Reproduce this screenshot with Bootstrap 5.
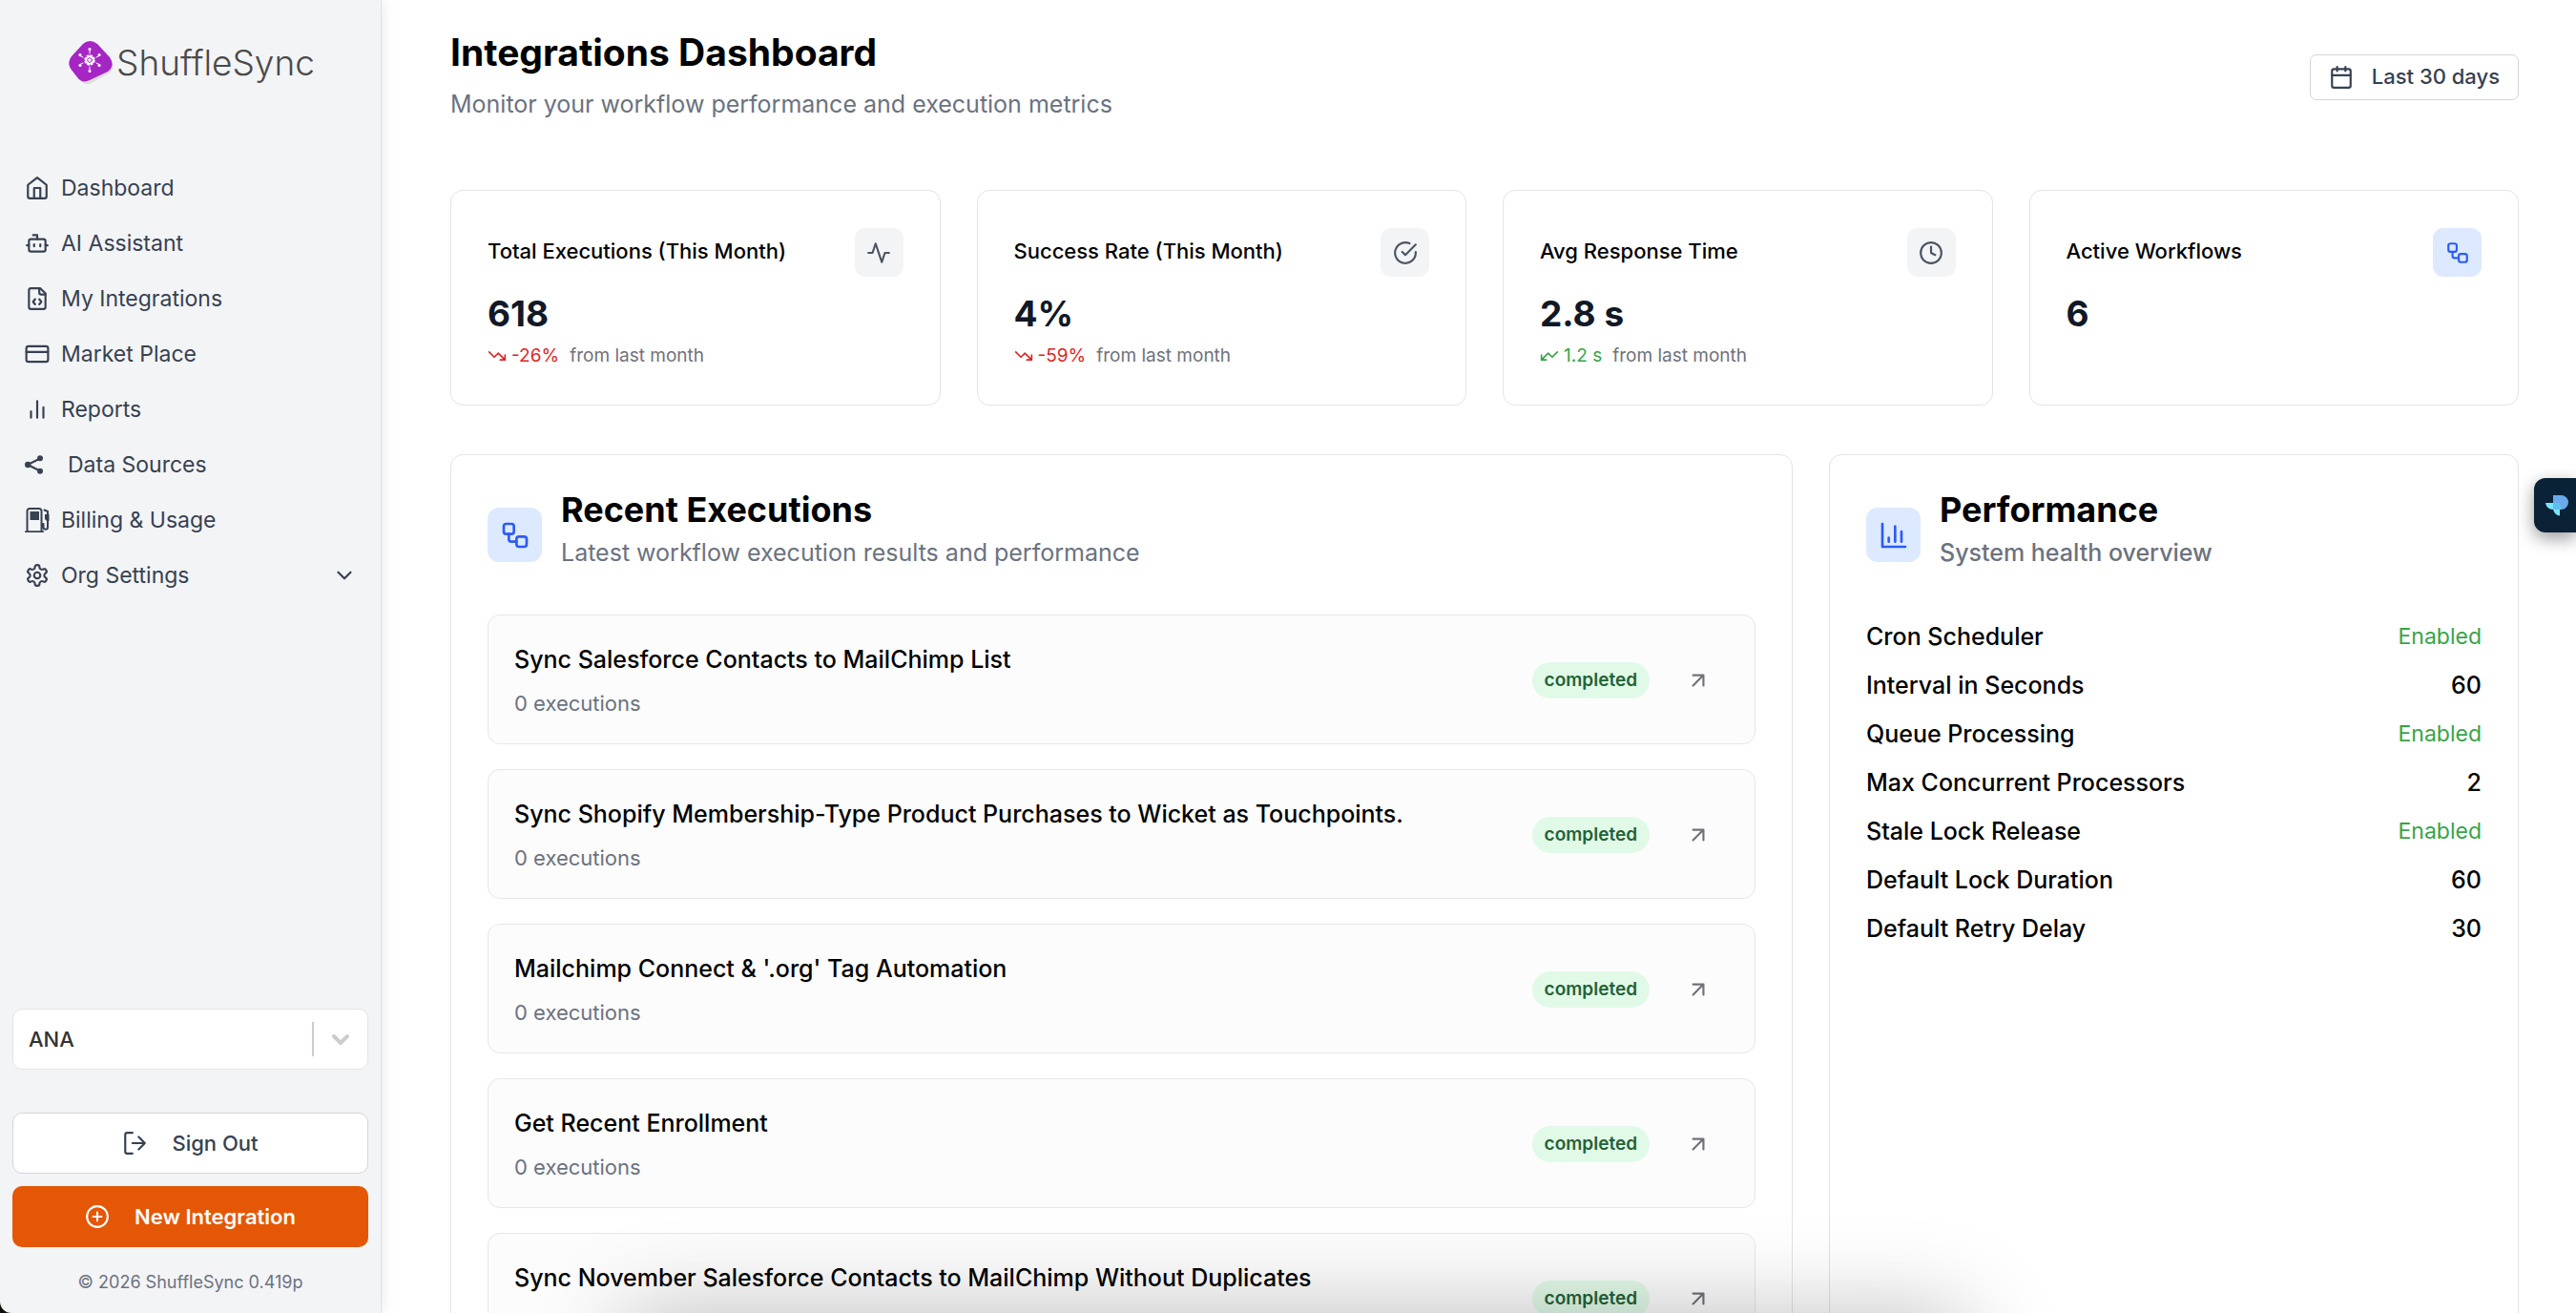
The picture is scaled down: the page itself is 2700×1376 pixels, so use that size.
<!DOCTYPE html>
<html lang="en">
<head>
<meta charset="utf-8">
<meta name="viewport" content="width=device-width, initial-scale=1">
<title>Integrations Dashboard - ShuffleSync</title>
<link href="https://cdn.jsdelivr.net/npm/bootstrap@5.3.0/dist/css/bootstrap.min.css" rel="stylesheet">
<style>
  :root { --line: #e4e4e7; --ink: #374151; --muted: #6b7280; --blue: #2b5cf6; }
  body { font-family: Inter, "Liberation Sans", sans-serif; font-size: 25px; line-height: 32px; color: #000; background: #fff; }
  svg { fill: none; stroke: currentColor; stroke-width: 2; stroke-linecap: round; stroke-linejoin: round; flex-shrink: 0; display: block; }
  .ic-20 { width: 20px; height: 20px; }
  .ic-26 { width: 26px; height: 26px; }
  .ic-32 { width: 32px; height: 32px; }
  .fw-500 { font-weight: 500; }
  .tone-muted { color: var(--muted); }

  .side-wrap { width: 400px; background: #0b0f08; box-shadow: 0 0 14px rgba(0,0,0,.1); z-index: 2; }
  .side { background: #f3f4f6; border-right: 1px solid #dfe2e7; border-bottom-left-radius: 12px; padding: 0 13px 17px; color: var(--ink); }
  .brand { color: #4a4a4a; font-size: 37px; line-height: 44px; font-weight: 350; padding: 42px 0 0 59px; gap: 2px; }
  .brand svg { width: 48px; height: 48px; }
  .side-nav { margin-top: 86px; padding-left: 13px; gap: 16px; }
  .side-nav .nav-link { color: var(--ink); font-size: 23px; line-height: 30px; padding: 6px 12px 6px 0; gap: 12px; }
  .side-nav .nav-link:hover { color: #111827; }
  .side-nav .spaced { gap: 25px; }
  .side-actions { gap: 13px; }
  .side-field { height: 64px; border-radius: 10px; font-size: 22px; }
  .org-box { margin-bottom: 32px; }
  .org-select { appearance: none; border: 1px solid #e2e4e8; background: #fff; color: #333; padding: 0 16px; }
  .org-mark { right: 18px; top: 13px; pointer-events: none; color: #ccc; }
  .side-btn { gap: 26px; }
  .btn-out, .btn-out:hover { background: #fff; border: 1px solid #d1d5db; color: var(--ink); }
  .btn-new, .btn-new:hover { background: #e45706; color: #fff; border: 0; }
  .side-foot { font-size: 18px; line-height: 30px; margin-top: 9px; }

  .main-area { padding: 30px 60px 0 72px; }
  .page-title { font-size: 39px; line-height: 50px; font-weight: 700; margin: 0; }
  .page-sub { margin: 13px 0 0; }
  .btn-range, .btn-range:hover { height: 48px; margin-top: 6px; border: 1px solid #d1d5db; border-radius: 7px; background: #fff; color: var(--ink); font-size: 22px; padding: 0 19px; gap: 19px; }
  .stat-row { --bs-gutter-x: 38px; margin-top: 74px; }
  .panel { border: 1px solid var(--line); border-radius: 13px; background: #fff; padding: 38px; }
  .stat { height: 226px; padding: 39px 38px; }
  .stat-name { font-size: 22px; line-height: 28px; margin: 0 0 3px; font-weight: 500; }
  .stat-num { font-size: 37px; line-height: 48px; font-weight: 700; color: #111827; margin-top: 15px; }
  .stat-sub { font-size: 19px; line-height: 24px; color: #71717a; gap: 5px; margin-top: 8px; }
  .delta { margin-right: 6px; }
  .down { color: #dc2626; }
  .up { color: #37a447; }
  .tile { width: 51px; height: 51px; border-radius: 11px; background: #f3f4f6; color: #4b5563; }
  .tile-blue { background: #dde9fe; color: var(--blue); }
  .tile-lg { width: 57px; height: 57px; margin-top: 17px; border-radius: 12px; }

  .panels { display: grid; grid-template-columns: 1407fr 723fr; gap: 38px; margin-top: 51px; }
  .panel-head { gap: 20px; margin-bottom: 50px; }
  .panel-title { font-size: 36px; line-height: 44px; font-weight: 700; margin: -3px 0 0; }
  .panel-sub { margin: 10px 0 0; line-height: 26px; }
  .runs { gap: 26px; padding-top: 2px; }
  .run { border: 1px solid #e5e7eb; border-radius: 13px; background: #fcfcfc; padding: 29px 46px 28px 27px; min-height: 136px; color: #000; }
  .run-name { font-weight: 500; }
  .run-sub { font-size: 22px; line-height: 28px; margin-top: 16px; color: var(--muted); }
  .state { height: 38px; border-radius: 19px; padding: 0 13px; font-size: 19px; font-weight: 600; background: #e1fae8; color: #256235; margin-right: 38px; }
  .run svg { color: #71717a; }
  .facts { margin: 0; }
  .facts > div { line-height: 51px; }
  .facts dt { font-weight: 500; }
  .facts dd { margin: 0; font-weight: 500; }
  .facts dd.up { font-weight: 400; font-size: 23px; }

  .helper { right: 0; top: 501px; width: 44px; height: 57px; background: #0b2135; border: 0; border-radius: 12px 0 0 12px; box-shadow: 0 6px 18px rgba(0,0,0,.4); padding: 0 0 0 12px; z-index: 3; }
  .helper svg { width: 24px; height: 24px; stroke: none; }
  .dock-shade { left: 655px; right: 640px; bottom: -100px; height: 100px; box-shadow: 0 0 95px rgba(0,0,0,.25); pointer-events: none; z-index: 4; }
</style>
</head>
<body>
<div class="d-flex vh-100 overflow-hidden">
  <div class="side-wrap flex-shrink-0 position-relative">
    <aside class="side d-flex flex-column h-100">
      <div class="brand d-flex align-items-center">
        <svg viewBox="0 0 48 48" stroke="none" aria-hidden="true">
          <path fill="#dcdcdc" stroke="none" d="M16 7Q24 0 32 8L44 21Q50 29 42 35L24 45Q16 48 11 41L4 31Q0 24 5 18Z"/>
          <path fill="#a626c4" stroke="none" d="M15 4Q22-2 30 4L43 18Q49 27 41 33L22 42Q14 46 9 39L2 30Q-2 23 3 17Z"/>
          <g stroke="#fff" stroke-width="1"><path d="M22 14V9M22 28v5M15 18l-4-2M29 18l4-2M15 24l-4 2M29 24l4 2"/></g>
          <g fill="#fff" stroke="none"><circle cx="22" cy="9.500" r="1.500"/><circle cx="22" cy="32.500" r="1.500"/><circle cx="12" cy="15.500" r="1.500"/><circle cx="32" cy="15.500" r="1.500"/><circle cx="12" cy="26.500" r="1.500"/><circle cx="32" cy="26.500" r="1.500"/></g>
          <circle cx="22" cy="21" r="4.500" fill="#fff" stroke="#fff" stroke-width="2.500" stroke-dasharray="2.500 1" stroke-linecap="butt"/>
          <circle cx="22" cy="21" r="2.300" stroke="#a626c4" stroke-width="1"/>
        </svg>
        <span>ShuffleSync</span>
      </div>

      <nav class="nav flex-column side-nav" aria-label="Main">
        <a class="nav-link d-flex align-items-center" href="#"><svg class="ic-26" viewBox="0 0 24 24"><path d="m3 9 9-7 9 7v11a2 2 0 0 1-2 2H5a2 2 0 0 1-2-2z"/><path d="M9 22V12h6v10"/></svg>Dashboard</a>
        <a class="nav-link d-flex align-items-center" href="#"><svg class="ic-26" viewBox="0 0 24 24"><path d="M12 8V4H8"/><rect x="4" y="8" width="16" height="12" rx="2"/><path d="M2 14h2M20 14h2M15 13v2M9 13v2"/></svg>AI Assistant</a>
        <a class="nav-link d-flex align-items-center" href="#"><svg class="ic-26" viewBox="0 0 24 24"><path d="M10 12.500 8 15l2 2.500M14 12.500l2 2.500-2 2.500M14 2v4a2 2 0 0 0 2 2h4"/><path d="M15 2H6a2 2 0 0 0-2 2v16a2 2 0 0 0 2 2h12a2 2 0 0 0 2-2V7z"/></svg>My Integrations</a>
        <a class="nav-link d-flex align-items-center" href="#"><svg class="ic-26" viewBox="0 0 24 24" stroke-width="1.800"><rect x="1.500" y="4.500" width="21" height="15" rx="2"/><path d="M1.500 10h21"/></svg>Market Place</a>
        <a class="nav-link d-flex align-items-center" href="#"><svg class="ic-26" viewBox="0 0 24 24"><path d="M18 20V10M12 20V4M6 20v-6"/></svg>Reports</a>
        <a class="nav-link d-flex align-items-center spaced" href="#"><svg class="ic-20" viewBox="0 0 20 20" stroke-width="1"><path d="M16 3.500 3 10l13 6.500"/><g fill="currentColor" stroke="none"><circle cx="3.200" cy="10" r="3.200"/><circle cx="16" cy="3.300" r="3"/><circle cx="16" cy="16.700" r="3"/></g></svg>Data Sources</a>
        <a class="nav-link d-flex align-items-center" href="#"><svg class="ic-26" viewBox="0 0 26 26" stroke-width="1.500"><path d="M2.500 25V3.500A2.500 2.500 0 0 1 5 1h10a2.500 2.500 0 0 1 2.500 2.500V25M1 25.200h18M17.500 17h2v3.500a2 2 0 0 0 4.500 0V4L20.500 2.500"/><path fill="currentColor" stroke="none" d="M5.500 4h9.500v9H5.500zM21 7h4.500v7L23 14l-2-2z"/></svg>Billing &amp; Usage</a>
        <a class="nav-link d-flex align-items-center" href="#"><svg class="ic-26" viewBox="0 0 24 24"><path d="M12.220 2h-.44a2 2 0 0 0-2 2v.18a2 2 0 0 1-1 1.730l-.43.25a2 2 0 0 1-2 0l-.15-.08a2 2 0 0 0-2.730.73l-.22.38a2 2 0 0 0 .73 2.730l.15.1a2 2 0 0 1 1 1.720v.51a2 2 0 0 1-1 1.740l-.15.09a2 2 0 0 0-.73 2.730l.22.38a2 2 0 0 0 2.730.73l.15-.08a2 2 0 0 1 2 0l.43.25a2 2 0 0 1 1 1.730V20a2 2 0 0 0 2 2h.44a2 2 0 0 0 2-2v-.18a2 2 0 0 1 1-1.730l.43-.25a2 2 0 0 1 2 0l.15.08a2 2 0 0 0 2.730-.73l.22-.39a2 2 0 0 0-.73-2.730l-.15-.08a2 2 0 0 1-1-1.740v-.5a2 2 0 0 1 1-1.740l.15-.09a2 2 0 0 0 .73-2.730l-.22-.38a2 2 0 0 0-2.730-.73l-.15.08a2 2 0 0 1-2 0l-.43-.25a2 2 0 0 1-1-1.730V4a2 2 0 0 0-2-2z"/><circle cx="12" cy="12" r="3"/></svg><span class="flex-grow-1">Org Settings</span><svg class="ic-26" viewBox="0 0 24 24"><path d="m6 9 6 6 6-6"/></svg></a>
      </nav>

      <div class="side-actions mt-auto d-flex flex-column">
        <div class="org-box position-relative">
          <label class="visually-hidden" for="org">Organization</label>
          <select id="org" class="side-field org-select w-100 fw-500"><option>ANA</option></select>
          <svg class="org-mark position-absolute" width="42" height="38" viewBox="0 0 42 38" aria-hidden="true"><path d="M2 1v36" stroke-linecap="butt"/><path d="m24 16 7 7 7-7" stroke-width="4"/></svg>
        </div>
        <button type="button" class="btn btn-out side-field side-btn w-100 fw-500 d-flex align-items-center justify-content-center"><svg class="ic-26" viewBox="0 0 24 24" stroke-width="1.800"><path d="M10 22H5a2 2 0 0 1-2-2V4a2 2 0 0 1 2-2h5M16 18l6-6-6-6M22 12H10"/></svg>Sign Out</button>
        <button type="button" class="btn btn-new side-field side-btn w-100 fw-semibold d-flex align-items-center justify-content-center"><svg class="ic-26" viewBox="0 0 24 24"><circle cx="12" cy="12" r="10"/><path d="M8 12h8M12 8v8"/></svg>New Integration</button>
        <div class="side-foot text-center tone-muted">© 2026 ShuffleSync 0.419p</div>
      </div>
    </aside>
  </div>

  <main class="main-area flex-grow-1 overflow-hidden">
    <header class="d-flex justify-content-between align-items-center">
      <div>
        <h1 class="page-title">Integrations Dashboard</h1>
        <p class="page-sub tone-muted">Monitor your workflow performance and execution metrics</p>
      </div>
      <button type="button" class="btn btn-range fw-500 d-flex align-items-center"><svg class="ic-26" viewBox="0 0 24 24"><path d="M8 2v4M16 2v4M3 10h18"/><rect x="3" y="4" width="18" height="18" rx="2"/></svg>Last 30 days</button>
    </header>

    <section class="row row-cols-4 stat-row">
      <div class="col"><div class="panel stat">
        <div class="d-flex justify-content-between align-items-center"><h2 class="stat-name">Total Executions (This Month)</h2><span class="tile d-flex align-items-center justify-content-center"><svg class="ic-26" viewBox="0 0 24 24"><path d="M22 12h-4l-3 9L9 3l-3 9H2"/></svg></span></div>
        <div class="stat-num">618</div>
        <div class="stat-sub d-flex align-items-center"><svg class="ic-20 down" viewBox="0 0 24 24"><path d="m22 17-8.500-8.500-5 5L2 7M16 17h6v-6"/></svg><span class="delta down">-26%</span><span>from last month</span></div>
      </div></div>
      <div class="col"><div class="panel stat">
        <div class="d-flex justify-content-between align-items-center"><h2 class="stat-name">Success Rate (This Month)</h2><span class="tile d-flex align-items-center justify-content-center"><svg class="ic-26" viewBox="0 0 24 24"><path d="M22 11.080V12a10 10 0 1 1-5.930-9.140M9 11l3 3L22 4"/></svg></span></div>
        <div class="stat-num">4%</div>
        <div class="stat-sub d-flex align-items-center"><svg class="ic-20 down" viewBox="0 0 24 24"><path d="m22 17-8.500-8.500-5 5L2 7M16 17h6v-6"/></svg><span class="delta down">-59%</span><span>from last month</span></div>
      </div></div>
      <div class="col"><div class="panel stat">
        <div class="d-flex justify-content-between align-items-center"><h2 class="stat-name">Avg Response Time</h2><span class="tile d-flex align-items-center justify-content-center"><svg class="ic-26" viewBox="0 0 24 24"><circle cx="12" cy="12" r="10"/><path d="M12 6v6l4 2"/></svg></span></div>
        <div class="stat-num">2.8 s</div>
        <div class="stat-sub d-flex align-items-center"><svg class="ic-20 up" viewBox="0 0 24 24"><path d="m2 17 8.500-8.500 5 5L22 7M8 17H2v-6"/></svg><span class="delta up">1.2 s</span><span>from last month</span></div>
      </div></div>
      <div class="col"><div class="panel stat">
        <div class="d-flex justify-content-between align-items-center"><h2 class="stat-name">Active Workflows</h2><span class="tile tile-blue d-flex align-items-center justify-content-center"><svg class="ic-26" viewBox="0 0 24 24"><rect x="3" y="3" width="8" height="8" rx="2"/><path d="M7 11v4a2 2 0 0 0 2 2h4"/><rect x="13" y="13" width="8" height="8" rx="2"/></svg></span></div>
        <div class="stat-num">6</div>
      </div></div>
    </section>

    <div class="panels">
      <section class="panel">
        <div class="panel-head d-flex align-items-start">
          <span class="tile tile-blue tile-lg d-flex align-items-center justify-content-center"><svg class="ic-32" viewBox="0 0 24 24"><rect x="3" y="3" width="8" height="8" rx="2"/><path d="M7 11v4a2 2 0 0 0 2 2h4"/><rect x="13" y="13" width="8" height="8" rx="2"/></svg></span>
          <div><h2 class="panel-title">Recent Executions</h2><p class="panel-sub tone-muted">Latest workflow execution results and performance</p></div>
        </div>
        <div class="runs d-flex flex-column">
          <a href="#" class="run d-flex align-items-center text-decoration-none"><div class="flex-grow-1"><div class="run-name">Sync Salesforce Contacts to MailChimp List</div><div class="run-sub">0 executions</div></div><span class="state d-flex align-items-center">completed</span><svg class="ic-26" viewBox="0 0 24 24"><path d="M7 7h10v10M7 17 17 7"/></svg></a>
          <a href="#" class="run d-flex align-items-center text-decoration-none"><div class="flex-grow-1"><div class="run-name">Sync Shopify Membership-Type Product Purchases to Wicket as Touchpoints.</div><div class="run-sub">0 executions</div></div><span class="state d-flex align-items-center">completed</span><svg class="ic-26" viewBox="0 0 24 24"><path d="M7 7h10v10M7 17 17 7"/></svg></a>
          <a href="#" class="run d-flex align-items-center text-decoration-none"><div class="flex-grow-1"><div class="run-name">Mailchimp Connect &amp; '.org' Tag Automation</div><div class="run-sub">0 executions</div></div><span class="state d-flex align-items-center">completed</span><svg class="ic-26" viewBox="0 0 24 24"><path d="M7 7h10v10M7 17 17 7"/></svg></a>
          <a href="#" class="run d-flex align-items-center text-decoration-none"><div class="flex-grow-1"><div class="run-name">Get Recent Enrollment</div><div class="run-sub">0 executions</div></div><span class="state d-flex align-items-center">completed</span><svg class="ic-26" viewBox="0 0 24 24"><path d="M7 7h10v10M7 17 17 7"/></svg></a>
          <a href="#" class="run d-flex align-items-center text-decoration-none"><div class="flex-grow-1"><div class="run-name">Sync November Salesforce Contacts to MailChimp Without Duplicates</div><div class="run-sub">0 executions</div></div><span class="state d-flex align-items-center">completed</span><svg class="ic-26" viewBox="0 0 24 24"><path d="M7 7h10v10M7 17 17 7"/></svg></a>
        </div>
      </section>

      <section class="panel">
        <div class="panel-head d-flex align-items-start">
          <span class="tile tile-blue tile-lg d-flex align-items-center justify-content-center"><svg class="ic-32" viewBox="0 0 24 24"><path d="M3 3v18h18M8 17v-3M13 17V5M18 17V9"/></svg></span>
          <div><h2 class="panel-title">Performance</h2><p class="panel-sub tone-muted fw-500">System health overview</p></div>
        </div>
        <dl class="facts">
          <div class="d-flex justify-content-between"><dt>Cron Scheduler</dt><dd class="up">Enabled</dd></div>
          <div class="d-flex justify-content-between"><dt>Interval in Seconds</dt><dd>60</dd></div>
          <div class="d-flex justify-content-between"><dt>Queue Processing</dt><dd class="up">Enabled</dd></div>
          <div class="d-flex justify-content-between"><dt>Max Concurrent Processors</dt><dd>2</dd></div>
          <div class="d-flex justify-content-between"><dt>Stale Lock Release</dt><dd class="up">Enabled</dd></div>
          <div class="d-flex justify-content-between"><dt>Default Lock Duration</dt><dd>60</dd></div>
          <div class="d-flex justify-content-between"><dt>Default Retry Delay</dt><dd>30</dd></div>
        </dl>
      </section>
    </div>
  </main>
</div>

<button type="button" class="helper position-fixed" aria-label="Open assistant">
  <svg viewBox="0 0 24 24"><path fill="#7ae4fa" d="M0 9h15v13.500q-5-.5-7-6.500Q1 15.500 0 9Z"/><path fill="#6aa9ea" d="M8 1h8.500a7.500 7.500 0 0 1 0 15H8z"/><path fill="#5cc0f2" d="M8 9h7l2 7H8z"/></svg>
</button>
<div class="dock-shade position-fixed"></div>
<script src="https://cdn.jsdelivr.net/npm/bootstrap@5.3.0/dist/js/bootstrap.bundle.min.js"></script>
</body>
</html>
